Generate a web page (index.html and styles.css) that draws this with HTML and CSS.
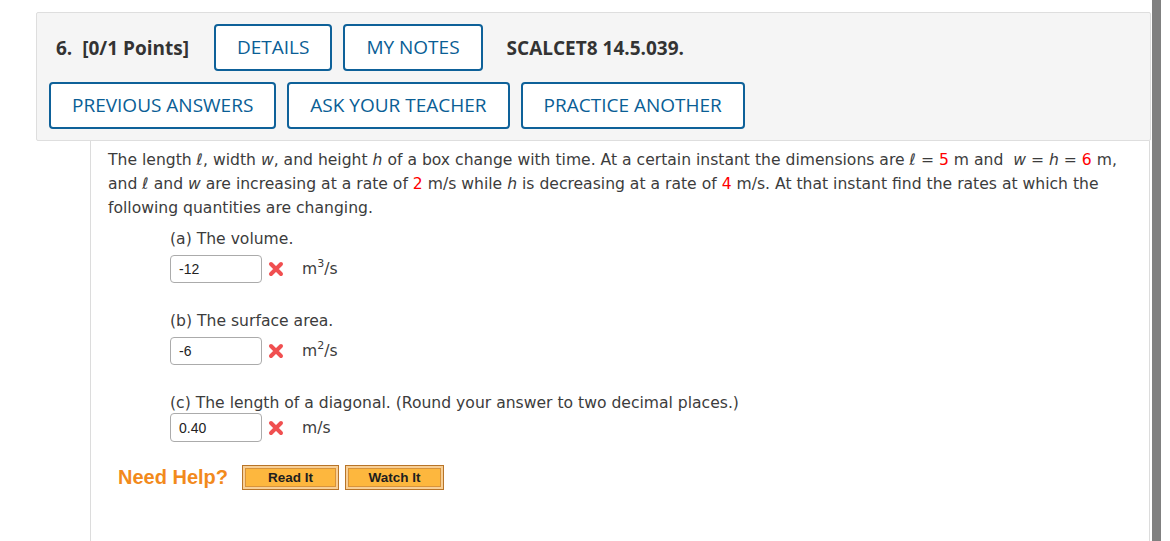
FILE: index.html
```html
<!DOCTYPE html>
<html lang="en">
<head>
<meta charset="utf-8">
<title>Question 6</title>
<link rel="stylesheet" href="styles.css">
</head>
<body>
<div class="page">
  <main class="main">
    <section class="qhead">
      <div class="row row1">
        <span class="qnum">6.&nbsp; [0/1 Points]</span>
        <button class="obtn">DETAILS</button>
        <button class="obtn">MY NOTES</button>
        <span class="qid">SCALCET8 14.5.039.</span>
      </div>
      <div class="row row2">
        <button class="obtn">PREVIOUS ANSWERS</button>
        <button class="obtn">ASK YOUR TEACHER</button>
        <button class="obtn">PRACTICE ANOTHER</button>
      </div>
    </section>
    <section class="qbody">
      <p class="intro">The length ℓ, width <i>w</i>, and height <i>h</i> of a box change with time. At a certain instant the dimensions are ℓ = <span class="red">5</span> m and&nbsp; <i>w</i> = <i>h</i> = <span class="red">6</span> m, and ℓ and <i>w</i> are increasing at a rate of <span class="red">2</span> m/s while <i>h</i> is decreasing at a rate of <span class="red">4</span> m/s. At that instant find the rates at which the following quantities are changing.</p>

      <div class="part part-a">
        <div class="plabel">(a) The volume.</div>
        <div class="answer">
          <span class="ans">-12</span>
          <svg class="xmark" width="16" height="16" viewBox="0 0 16 16"><path d="M3 3 L13 13 M13 3 L3 13" stroke="#f04f50" stroke-width="4" stroke-linecap="round"/></svg>
          <span class="unit">m<sup>3</sup>/s</span>
        </div>
      </div>

      <div class="part part-b">
        <div class="plabel">(b) The surface area.</div>
        <div class="answer">
          <span class="ans">-6</span>
          <svg class="xmark" width="16" height="16" viewBox="0 0 16 16"><path d="M3 3 L13 13 M13 3 L3 13" stroke="#f04f50" stroke-width="4" stroke-linecap="round"/></svg>
          <span class="unit">m<sup>2</sup>/s</span>
        </div>
      </div>

      <div class="part part-c">
        <div class="plabel">(c) The length of a diagonal. (Round your answer to two decimal places.)</div>
        <div class="answer">
          <span class="ans ans-tall">0.40</span>
          <svg class="xmark" width="16" height="16" viewBox="0 0 16 16"><path d="M3 3 L13 13 M13 3 L3 13" stroke="#f04f50" stroke-width="4" stroke-linecap="round"/></svg>
          <span class="unit">m/s</span>
        </div>
      </div>

      <div class="help">
        <span class="needhelp">Need Help?</span>
        <button class="hbtn">Read It</button>
        <button class="hbtn hbtn-wide">Watch It</button>
      </div>
    </section>
  </main>
  <div class="scrollbar"></div>
</div>
</body>
</html>
```

FILE: styles.css
```css
html, body {
  margin: 0;
  padding: 0;
  background: #ffffff;
}

.page {
  display: flex;
  width: 1170px;
  height: 541px;
  overflow: hidden;
}

.main {
  width: 1116px;
  margin-left: 36px;
  padding-top: 12px;
  display: flex;
  flex-direction: column;
}

.scrollbar {
  width: 9px;
  height: 541px;
  background: #808080;
  flex: none;
}

.qhead {
  width: 1113px;
  background: #f5f5f5;
  border: 1px solid #dedede;
  border-radius: 2px;
  padding: 11px 0 11px 0;
  font-family: "Open Sans", sans-serif;
}

.row {
  display: flex;
  align-items: center;
}

.row1 {
  padding-left: 19px;
  gap: 11px;
}

.row2 {
  padding-left: 12px;
  gap: 11px;
  margin-top: 11px;
}

.qnum, .qid {
  font-weight: 700;
  font-size: 19px;
  color: #333333;
}

.qnum {
  margin-right: 14px;
}

.qid {
  margin-left: 13px;
}

.obtn {
  height: 47px;
  box-sizing: border-box;
  border: 2px solid #0e6199;
  border-radius: 4px;
  background: #ffffff;
  color: #0a5e95;
  font-family: "Open Sans", sans-serif;
  font-size: 19px;
  padding: 0 21px;
  line-height: 1;
}

.qbody {
  flex: 1;
  margin-left: 54px;
  margin-right: 2px;
  border-left: 1px solid #dcdcdc;
  border-right: 1px solid #dcdcdc;
  padding: 7px 20px 0 17px;
  font-family: "DejaVu Sans", Verdana, sans-serif;
  font-size: 15.6px;
  color: #3c3c3c;
}

.intro {
  margin: 0;
  line-height: 24px;
}

.red {
  color: #ff0000;
}

.part {
  margin-left: 62px;
}

.plabel {
  line-height: 24px;
}

.part-a {
  margin-top: 7px;
}

.part-b {
  margin-top: 26px;
}

.part-c {
  margin-top: 26px;
}

.answer {
  display: flex;
  align-items: center;
  margin-top: 4px;
}

.part-c .answer {
  margin-top: -2px;
}

.ans {
  box-sizing: border-box;
  width: 92px;
  height: 28px;
  border: 1px solid #ababab;
  border-radius: 4px;
  padding-left: 8px;
  font-family: "Liberation Sans", Arial, sans-serif;
  font-size: 14px;
  color: #222222;
  display: flex;
  align-items: center;
}

.ans-tall {
  height: 29px;
}

.xmark {
  margin-left: 6px;
  flex: none;
}

.unit {
  margin-left: 18px;
  line-height: 20px;
}

.unit sup {
  font-size: 11px;
  line-height: 0;
  vertical-align: 7px;
}

.help {
  display: flex;
  align-items: center;
  margin-top: 23px;
  margin-left: 10px;
  gap: 6px;
}

.needhelp {
  font-family: "Liberation Sans", Arial, sans-serif;
  font-weight: 700;
  font-size: 20px;
  color: #f28a1c;
  margin-right: 8px;
}

.hbtn {
  width: 97px;
  height: 25px;
  box-sizing: border-box;
  border: 1px solid #b87428;
  background: #fdb73e;
  box-shadow: inset 0 0 0 2px #f7cf97, inset 0 0 0 3px #d8933a;
  font-family: "Liberation Sans", Arial, sans-serif;
  font-weight: 700;
  font-size: 13.5px;
  color: #1e1e1e;
  padding: 0;
  border-radius: 0;
}

.hbtn-wide {
  width: 99px;
}
```
